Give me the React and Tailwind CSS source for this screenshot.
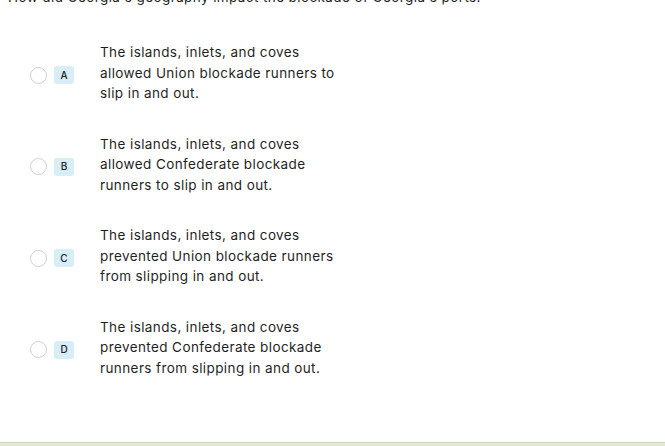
import React from "react";

const options = [
  { key: "A", lines: ["The islands, inlets, and coves", "allowed Union blockade runners to", "slip in and out."] },
  { key: "B", lines: ["The islands, inlets, and coves", "allowed Confederate blockade", "runners to slip in and out."] },
  { key: "C", lines: ["The islands, inlets, and coves", "prevented Union blockade runners", "from slipping in and out."] },
  { key: "D", lines: ["The islands, inlets, and coves", "prevented Confederate blockade", "runners from slipping in and out."] },
];

function Option({ opt }) {
  return (
    <div className="flex items-center h-[62px]">
      <div className="ml-[30px] w-[17px] h-[17px] rounded-full border-[1.5px] border-[#cfcfcf] bg-white mt-[4px]" />
      <div className="ml-[7px] w-[20px] h-[18px] rounded-[3px] bg-[#d7eef8] flex items-center justify-center text-[10px] font-medium text-[#222] mt-[4px]">
        {opt.key}
      </div>
      <div className="ml-[26px] text-[13.5px] tracking-[0.4px] leading-[20.5px] text-[#1f1f1f]">
        {opt.lines.map((l, i) => (
          <div key={i}>{l}</div>
        ))}
      </div>
    </div>
  );
}

export default function App() {
  return (
    <div className="relative w-[665px] h-[446px] bg-white overflow-hidden" style={{ fontFamily: "Inter, 'Noto Sans', sans-serif" }}>
      <div className="mt-[-11px] ml-[8px] text-[13.5px] tracking-[0.4px] leading-[16px] text-[#1f1f1f]">
        How did Georgia's geography impact the blockade of Georgia's ports.
      </div>
      <div className="mt-[37px] flex flex-col gap-[29.5px]">
        {options.map((o) => (
          <Option key={o.key} opt={o} />
        ))}
      </div>
      <div className="absolute left-0 right-0 bottom-0 h-[4px] bg-[#e3e8d3] border-t border-[#cdd5bd]" />
    </div>
  );
}
